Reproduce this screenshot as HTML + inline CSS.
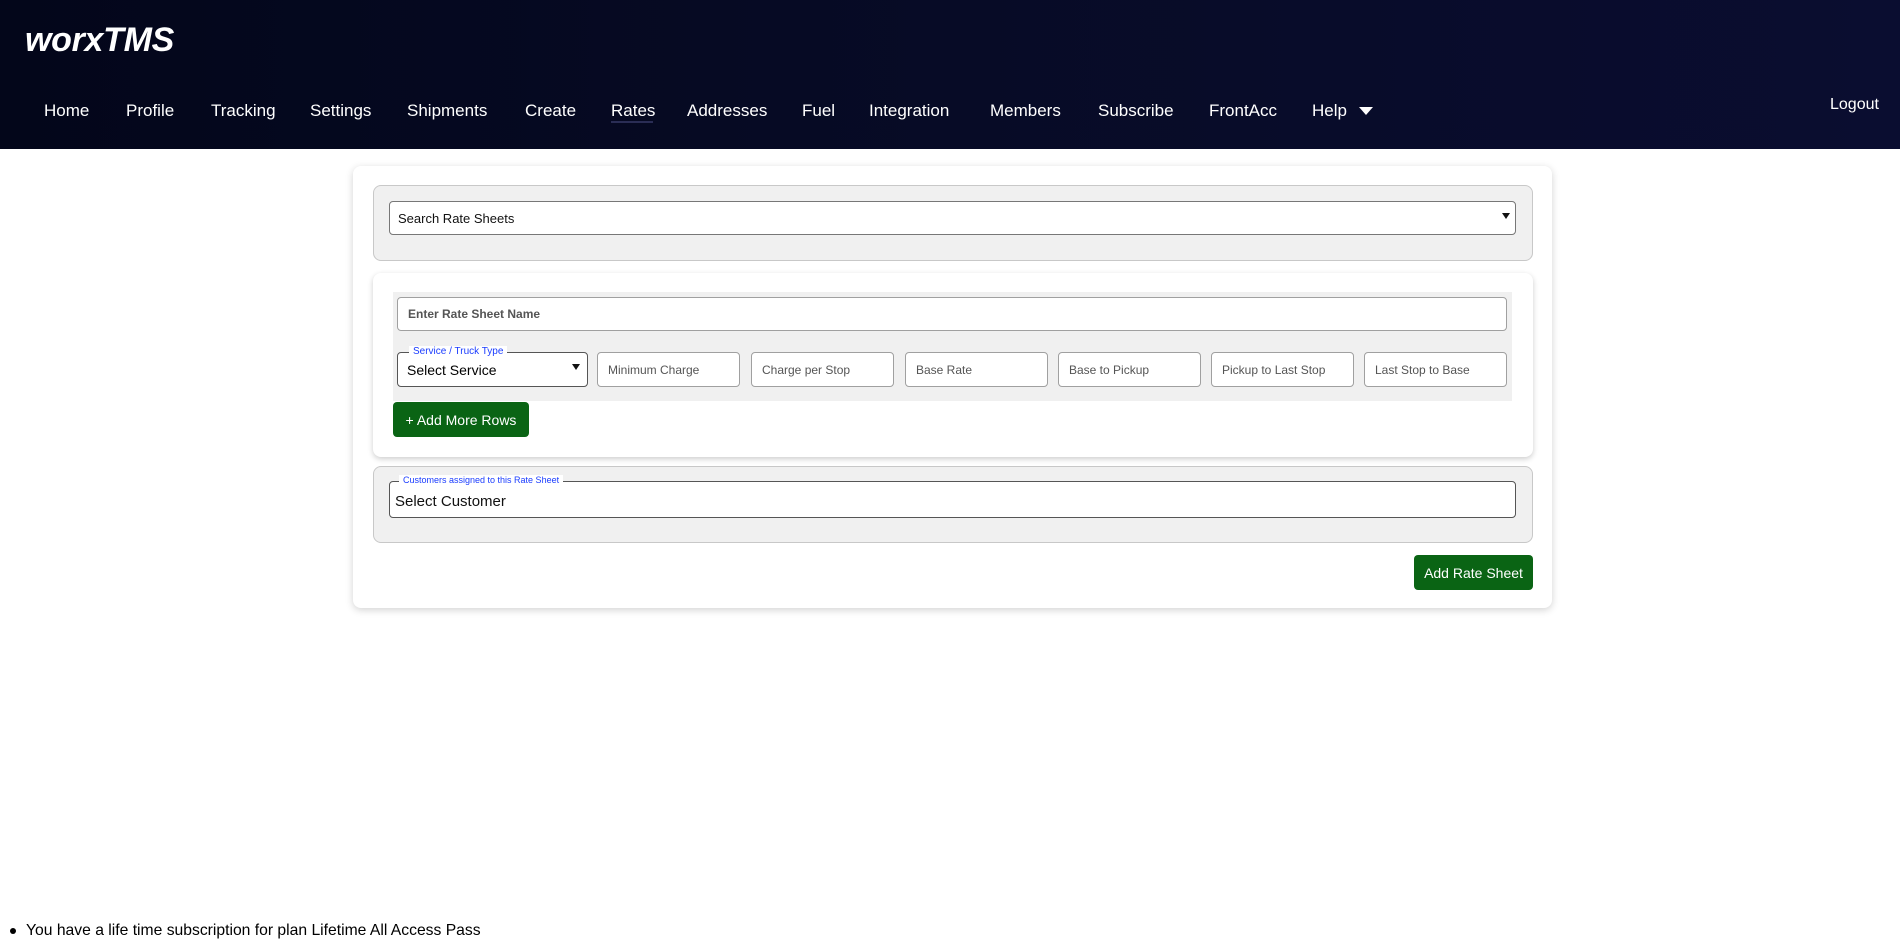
<!DOCTYPE html>
<html><head><meta charset="utf-8"><style>
*{box-sizing:border-box;margin:0;padding:0}
body{width:1900px;height:952px;position:relative;background:#fff;font-family:"Liberation Sans",sans-serif;overflow:hidden}
.hdr{position:absolute;left:0;top:0;width:1900px;height:149px;background:linear-gradient(90deg,#03061a 0%,#070b26 50%,#0a0d30 100%)}
.logo{position:absolute;left:25px;top:21px;color:#fff;font-weight:bold;font-style:italic;font-size:34px;letter-spacing:-0.3px}
.nav{position:absolute;top:101px;color:#fff;font-size:17px;white-space:nowrap}
.abs{position:absolute}
.card{position:absolute;left:353px;top:166px;width:1199px;height:442px;background:#fff;border-radius:8px;box-shadow:0 2px 8px rgba(0,0,0,.18)}
.panel{position:absolute;background:#f0f0f0;border:1px solid #c8c8c8;border-radius:8px}
.inp{position:absolute;background:#fff;border:1px solid #a0a0a0;border-radius:4px;font-size:12px;color:#555;padding-left:10px;display:flex;align-items:center}
.btn{position:absolute;background:#0a6414;color:#fff;border-radius:4px;display:flex;align-items:center;justify-content:center;font-size:14px}
.leg{position:absolute;background:#fff;color:#1a3cff;font-size:10px;padding:0 4px;line-height:11px}
</style></head><body>
<div class="hdr">
<div class="logo">worxTMS</div>
<div class="nav" style="left:44px">Home</div>
<div class="nav" style="left:126px">Profile</div>
<div class="nav" style="left:211px">Tracking</div>
<div class="nav" style="left:310px">Settings</div>
<div class="nav" style="left:407px">Shipments</div>
<div class="nav" style="left:525px">Create</div>
<div class="nav" style="left:611px">Rates</div>
<div class="abs" style="left:611px;top:121px;width:42px;height:2px;background:#2a2d55"></div>
<div class="nav" style="left:687px">Addresses</div>
<div class="nav" style="left:802px">Fuel</div>
<div class="nav" style="left:869px">Integration</div>
<div class="nav" style="left:990px">Members</div>
<div class="nav" style="left:1098px">Subscribe</div>
<div class="nav" style="left:1209px">FrontAcc</div>
<div class="nav" style="left:1312px">Help</div>
<div class="abs" style="left:1359px;top:107px;width:0;height:0;border-left:7px solid transparent;border-right:7px solid transparent;border-top:8px solid #fff"></div>
<div class="nav" style="left:1830px;top:96px;font-size:16px">Logout</div>
</div>

<div class="card"></div>
<div class="panel" style="left:373px;top:185px;width:1160px;height:76px"></div>
<div class="inp" style="left:389px;top:201px;width:1127px;height:34px;border-color:#777;color:#111;font-size:13px;padding-left:8px">Search Rate Sheets</div>
<div class="abs" style="left:1502px;top:213px;border-left:4px solid transparent;border-right:4px solid transparent;border-top:6px solid #111"></div>

<div class="abs" style="left:373px;top:273px;width:1160px;height:184px;background:#fff;border-radius:8px;box-shadow:0 2px 6px rgba(0,0,0,.2)"></div>
<div class="abs" style="left:393px;top:292px;width:1119px;height:109px;background:#f0f0f0"></div>
<div class="inp" style="left:397px;top:297px;width:1110px;height:34px;font-weight:bold;color:#555;font-size:12px">Enter Rate Sheet Name</div>
<div class="inp" style="left:397px;top:352px;width:191px;height:35px;border-color:#555;color:#000;font-size:14px;padding-left:9px">Select Service</div>
<div class="abs" style="left:572px;top:364px;border-left:4px solid transparent;border-right:4px solid transparent;border-top:6px solid #111"></div>
<div class="leg" style="left:409px;top:346px">Service / Truck Type</div>
<div class="inp" style="left:597px;top:352px;width:143px;height:35px">Minimum Charge</div>
<div class="inp" style="left:751px;top:352px;width:143px;height:35px">Charge per Stop</div>
<div class="inp" style="left:905px;top:352px;width:143px;height:35px">Base Rate</div>
<div class="inp" style="left:1058px;top:352px;width:143px;height:35px">Base to Pickup</div>
<div class="inp" style="left:1211px;top:352px;width:143px;height:35px">Pickup to Last Stop</div>
<div class="inp" style="left:1364px;top:352px;width:143px;height:35px">Last Stop to Base</div>
<div class="btn" style="left:393px;top:402px;width:136px;height:35px">+ Add More Rows</div>

<div class="panel" style="left:373px;top:466px;width:1160px;height:77px"></div>
<div class="inp" style="left:389px;top:481px;width:1127px;height:37px;border-color:#555;color:#111;font-size:15px;padding-left:5px;padding-top:3px">Select Customer</div>
<div class="leg" style="left:399px;top:475px;font-size:9px">Customers assigned to this Rate Sheet</div>
<div class="btn" style="left:1414px;top:555px;width:119px;height:35px">Add Rate Sheet</div>

<div class="abs" style="left:10px;top:928px;width:6px;height:6px;border-radius:50%;background:#000"></div>
<div class="abs" style="left:26px;top:922px;font-size:15.7px;color:#000;white-space:nowrap">You have a life time subscription for plan Lifetime All Access Pass</div>
</body></html>
